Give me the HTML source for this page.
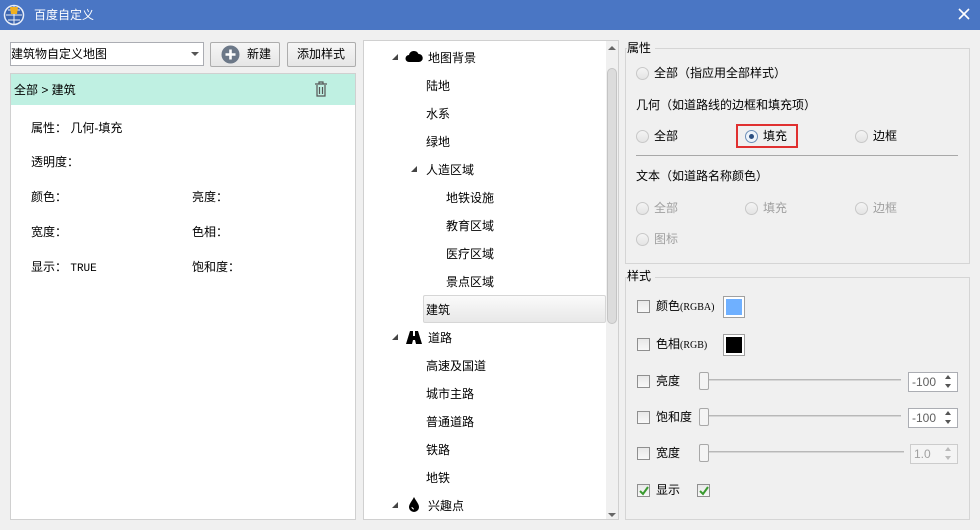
<!DOCTYPE html>
<html><head><meta charset="utf-8"><style>
*{margin:0;padding:0;box-sizing:border-box}
body{width:980px;height:530px;background:#f0f0f0;font-family:"Liberation Sans","Noto Sans CJK SC",sans-serif;font-size:12px;color:#000;position:relative;overflow:hidden}
.a{position:absolute;white-space:nowrap}
.t{position:absolute;white-space:nowrap;line-height:14px}
.rad{position:absolute;width:13px;height:13px;border-radius:50%;border:1px solid #c8c8c8;background:linear-gradient(#f4f4f4,#e4e4e4)}
.cb{position:absolute;width:13px;height:13px;border:1px solid #8f8f8f;background:linear-gradient(#e8e8e8,#f8f8f8)}
.tri{position:absolute;width:0;height:0;border-left:6px solid transparent;border-bottom:6px solid #444}
.g{color:#a0a0a0}
.slider{position:absolute;height:2px;background:#d6d6d6;border-top:1px solid #b8b8b8}
.thumb{position:absolute;width:10px;height:18px;border:1px solid #a8a8a8;background:#f4f4f4;border-radius:2px}
.spin{position:absolute;width:50px;height:20px;border:1px solid #abadb3;background:#fff;font-size:12px;color:#606060;padding:2px 0 0 3px}
</style></head><body>
<div class="a" style="left:0;top:0;width:980px;height:30px;background:#4a76c4"></div>
<svg class="a" style="left:3px;top:4px" width="22" height="22" viewBox="0 0 22 22"><circle cx="11" cy="11" r="9.5" fill="#3a64b0" stroke="#e8eef8" stroke-width="1.5"/><path d="M3 11h16M11 2v18M5 6h12M5 16h12" stroke="#e8eef8" stroke-width="1"/><path d="M7 3h8l-1 7h-6z" fill="#f0b020"/></svg>
<div class="t" style="left:34px;top:8px;color:#fff;font-size:12px">百度自定义</div>
<svg class="a" style="left:958px;top:8px" width="12" height="12"><path d="M1 1l10 10M11 1L1 11" stroke="#fff" stroke-width="1.6"/></svg>

<div class="a" style="left:10px;top:42px;width:194px;height:24px;background:#fff;border:1px solid #abadb3"></div>
<div class="t" style="left:11px;top:47px">建筑物自定义地图</div>
<div class="a" style="left:191px;top:52px;border-left:4px solid transparent;border-right:4px solid transparent;border-top:4px solid #555"></div>
<div class="a" style="left:210px;top:42px;width:70px;height:25px;border:1px solid #adadad;border-radius:2px;background:linear-gradient(#f6f6f6,#e6e6e6)"></div>
<svg class="a" style="left:221px;top:45px" width="19" height="19"><circle cx="9.5" cy="9.5" r="9" fill="#6c7888"/><path d="M9.5 4.5v10M4.5 9.5h10" stroke="#fff" stroke-width="2.6"/></svg>
<div class="t" style="left:247px;top:47px">新建</div>
<div class="a" style="left:287px;top:42px;width:69px;height:25px;border:1px solid #adadad;border-radius:2px;background:linear-gradient(#f6f6f6,#e6e6e6)"></div>
<div class="t" style="left:297px;top:47px">添加样式</div>

<div class="a" style="left:10px;top:73px;width:346px;height:447px;background:#fff;border:1px solid #d0d0d0"></div>
<div class="a" style="left:11px;top:74px;width:344px;height:31px;background:#bff0e2"></div>
<div class="t" style="left:14px;top:83px">全部 &gt; 建筑</div>
<svg class="a" style="left:314px;top:81px" width="14" height="16"><path d="M1 3h12M5 3V1h4v2M3 4v11h8V4M5.5 6v7M8.5 6v7" fill="none" stroke="#555" stroke-width="1.2"/></svg>
<div class="t" style="left:31px;top:121px">属性：  几何-填充</div>
<div class="t" style="left:31px;top:155px">透明度：</div>
<div class="t" style="left:31px;top:190px">颜色：</div>
<div class="t" style="left:192px;top:190px">亮度：</div>
<div class="t" style="left:31px;top:225px">宽度：</div>
<div class="t" style="left:192px;top:225px">色相：</div>
<div class="t" style="left:31px;top:260px">显示： <span style="font-family:'Liberation Mono',monospace;font-size:11px">TRUE</span></div>
<div class="t" style="left:192px;top:260px">饱和度：</div>

<div class="a" style="left:363px;top:40px;width:256px;height:480px;background:#fff;border:1px solid #d0d0d0"></div>
<div class="a" style="left:606px;top:41px;width:12px;height:478px;background:#f0f0f0"></div>
<div class="a" style="left:607px;top:68px;width:10px;height:256px;background:#dcdcdc;border:1px solid #c4c4c4;border-radius:5px"></div>
<div class="a" style="left:608px;top:46px;border-left:4px solid transparent;border-right:4px solid transparent;border-bottom:4px solid #666"></div>
<div class="a" style="left:608px;top:513px;border-left:4px solid transparent;border-right:4px solid transparent;border-top:4px solid #666"></div>
<div class="a" style="left:423px;top:295px;width:183px;height:28px;border:1px solid #d6d6d6;border-radius:2px;background:linear-gradient(#fafafa,#e8e8e8)"></div>

<div class="tri" style="left:392px;top:54px"></div>
<svg class="a" style="left:405px;top:49px" width="18" height="14"><path d="M4 13a3.5 3.5 0 0 1 0-7a5 5 0 0 1 9.5-1a4 4 0 0 1 0.5 8z" fill="#000"/></svg>
<div class="t" style="left:428px;top:51px">地图背景</div>
<div class="t" style="left:426px;top:79px">陆地</div>
<div class="t" style="left:426px;top:107px">水系</div>
<div class="t" style="left:426px;top:135px">绿地</div>
<div class="tri" style="left:411px;top:166px"></div>
<div class="t" style="left:426px;top:163px">人造区域</div>
<div class="t" style="left:446px;top:191px">地铁设施</div>
<div class="t" style="left:446px;top:219px">教育区域</div>
<div class="t" style="left:446px;top:247px">医疗区域</div>
<div class="t" style="left:446px;top:275px">景点区域</div>
<div class="t" style="left:426px;top:303px">建筑</div>
<div class="tri" style="left:392px;top:334px"></div>
<svg class="a" style="left:405px;top:330px" width="18" height="14"><path d="M1 14L5 1h3v5h2V1h3l4 13h-6l-1-4h-2l-1 4z" fill="#000"/></svg>
<div class="t" style="left:428px;top:331px">道路</div>
<div class="t" style="left:426px;top:359px">高速及国道</div>
<div class="t" style="left:426px;top:387px">城市主路</div>
<div class="t" style="left:426px;top:415px">普通道路</div>
<div class="t" style="left:426px;top:443px">铁路</div>
<div class="t" style="left:426px;top:471px">地铁</div>
<div class="tri" style="left:392px;top:502px"></div>
<svg class="a" style="left:407px;top:496px" width="14" height="17"><path d="M7 1C5 5 2 8 2 11a5 5 0 0 0 10 0C12 8 9 5 7 1z" fill="#000"/><path d="M5 11a2 2 0 0 0 2 2" stroke="#fff" stroke-width="1" fill="none"/></svg>
<div class="t" style="left:428px;top:499px">兴趣点</div>

<div class="a" style="left:625px;top:48px;width:345px;height:216px;border:1px solid #d5d5d5"></div>
<div class="t" style="left:627px;top:41px;background:#f0f0f0;padding-right:4px">属性</div>
<div class="rad" style="left:636px;top:67px"></div>
<div class="t" style="left:654px;top:66px">全部（指应用全部样式）</div>
<div class="t" style="left:636px;top:98px">几何（如道路线的边框和填充项）</div>
<div class="rad" style="left:636px;top:130px"></div>
<div class="t" style="left:654px;top:129px">全部</div>
<div class="a" style="left:736px;top:124px;width:62px;height:24px;border:2px solid #e03030"></div>
<div class="rad" style="left:745px;top:130px;border-color:#6d8fb8;background:#eef4fa"></div>
<div class="a" style="left:749px;top:134px;width:5px;height:5px;border-radius:50%;background:#2c4f80"></div>
<div class="t" style="left:763px;top:129px">填充</div>
<div class="rad" style="left:855px;top:130px"></div>
<div class="t" style="left:873px;top:129px">边框</div>
<div class="a" style="left:636px;top:155px;width:322px;height:1px;background:#a8a8a8"></div>
<div class="t" style="left:636px;top:169px">文本（如道路名称颜色）</div>
<div class="rad" style="left:636px;top:202px"></div>
<div class="t g" style="left:654px;top:201px">全部</div>
<div class="rad" style="left:745px;top:202px"></div>
<div class="t g" style="left:763px;top:201px">填充</div>
<div class="rad" style="left:855px;top:202px"></div>
<div class="t g" style="left:873px;top:201px">边框</div>
<div class="rad" style="left:636px;top:233px"></div>
<div class="t g" style="left:654px;top:232px">图标</div>

<div class="a" style="left:625px;top:277px;width:345px;height:243px;border:1px solid #d5d5d5"></div>
<div class="t" style="left:627px;top:269px;background:#f0f0f0;padding-right:4px">样式</div>
<div class="cb" style="left:637px;top:300px"></div>
<div class="t" style="left:656px;top:299px">颜色<span style="font-family:'Liberation Serif',serif;font-size:10px">(RGBA)</span></div>
<div class="a" style="left:723px;top:296px;width:22px;height:22px;border:1px solid #a0a0a0;background:#fff;padding:2px"><div style="width:100%;height:100%;background:#6fb0ff"></div></div>
<div class="cb" style="left:637px;top:338px"></div>
<div class="t" style="left:656px;top:337px">色相<span style="font-family:'Liberation Serif',serif;font-size:10px">(RGB)</span></div>
<div class="a" style="left:723px;top:334px;width:22px;height:22px;border:1px solid #a0a0a0;background:#fff;padding:2px"><div style="width:100%;height:100%;background:#000"></div></div>

<div class="cb" style="left:637px;top:375px"></div>
<div class="t" style="left:656px;top:374px">亮度</div>
<div class="slider" style="left:704px;top:379px;width:197px"></div>
<div class="thumb" style="left:699px;top:372px"></div>
<div class="spin" style="left:908px;top:372px">-100</div>

<div class="cb" style="left:637px;top:411px"></div>
<div class="t" style="left:656px;top:410px">饱和度</div>
<div class="slider" style="left:704px;top:415px;width:197px"></div>
<div class="thumb" style="left:699px;top:408px"></div>
<div class="spin" style="left:908px;top:408px">-100</div>

<div class="cb" style="left:637px;top:447px"></div>
<div class="t" style="left:656px;top:446px">宽度</div>
<div class="slider" style="left:704px;top:451px;width:200px"></div>
<div class="thumb" style="left:699px;top:444px"></div>
<div class="spin" style="left:910px;top:444px;width:48px;border-color:#ccc;background:#f4f4f4;color:#a0a0a0">1.0</div>

<div class="cb" style="left:637px;top:484px"></div>
<svg class="a" style="left:638px;top:485px" width="12" height="12"><path d="M2 6l3 3 5-7" stroke="#3a9a30" stroke-width="2" fill="none"/></svg>
<div class="t" style="left:656px;top:483px">显示</div>
<div class="cb" style="left:697px;top:484px"></div>
<svg class="a" style="left:698px;top:485px" width="12" height="12"><path d="M2 6l3 3 5-7" stroke="#3a9a30" stroke-width="2" fill="none"/></svg>

<div class="a" style="left:945px;top:375px;border-left:3px solid transparent;border-right:3px solid transparent;border-bottom:4px solid #555"></div>
<div class="a" style="left:945px;top:384px;border-left:3px solid transparent;border-right:3px solid transparent;border-top:4px solid #555"></div>
<div class="a" style="left:945px;top:411px;border-left:3px solid transparent;border-right:3px solid transparent;border-bottom:4px solid #555"></div>
<div class="a" style="left:945px;top:420px;border-left:3px solid transparent;border-right:3px solid transparent;border-top:4px solid #555"></div>
<div class="a" style="left:945px;top:447px;border-left:3px solid transparent;border-right:3px solid transparent;border-bottom:4px solid #bbb"></div>
<div class="a" style="left:945px;top:456px;border-left:3px solid transparent;border-right:3px solid transparent;border-top:4px solid #bbb"></div>
</body></html>
